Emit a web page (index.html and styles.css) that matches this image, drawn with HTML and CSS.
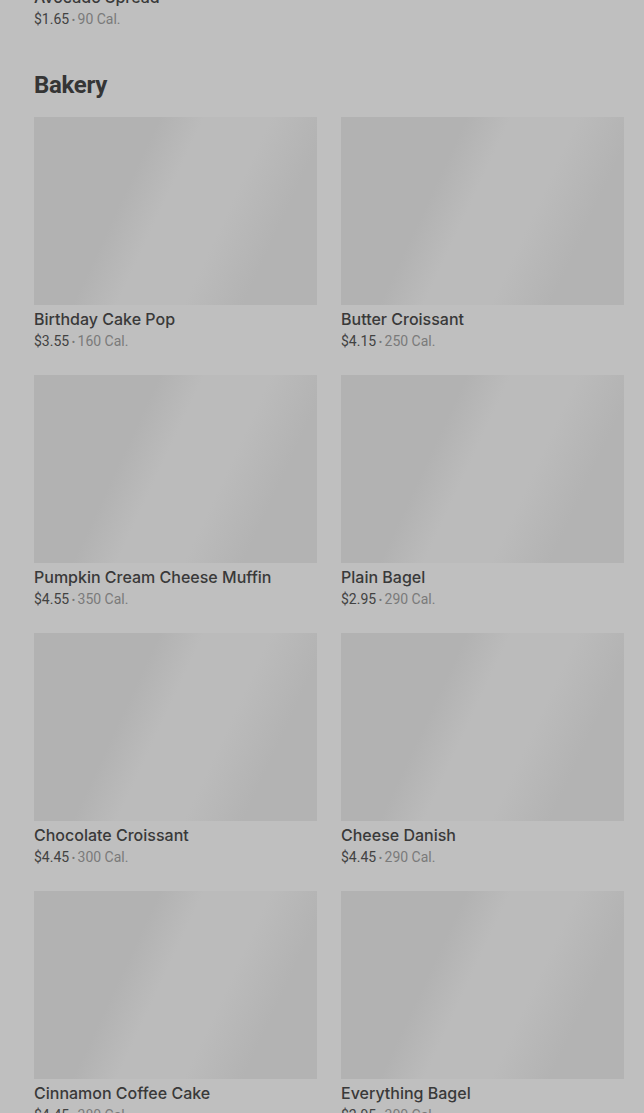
FILE: index.html
```html
<!DOCTYPE html>
<html>
<head>
<meta charset="utf-8">
<link rel="stylesheet" href="styles.css">
</head>
<body>
<div class="page">
  <div class="prev-item">
    <div class="item-title">Avocado Spread</div>
    <div class="item-meta"><span class="price">$1.65</span><span class="dot"> • </span><span class="cal">90 Cal.</span></div>
  </div>
  <section class="section">
    <h2 class="section-title">Bakery</h2>
    <div class="grid">
      <div class="card"><div class="thumb"></div><div class="item-title">Birthday Cake Pop</div><div class="item-meta"><span class="price">$3.55</span><span class="dot"> • </span><span class="cal">160 Cal.</span></div></div>
      <div class="card"><div class="thumb"></div><div class="item-title">Butter Croissant</div><div class="item-meta"><span class="price">$4.15</span><span class="dot"> • </span><span class="cal">250 Cal.</span></div></div>
      <div class="card"><div class="thumb"></div><div class="item-title">Pumpkin Cream Cheese Muffin</div><div class="item-meta"><span class="price">$4.55</span><span class="dot"> • </span><span class="cal">350 Cal.</span></div></div>
      <div class="card"><div class="thumb"></div><div class="item-title">Plain Bagel</div><div class="item-meta"><span class="price">$2.95</span><span class="dot"> • </span><span class="cal">290 Cal.</span></div></div>
      <div class="card"><div class="thumb"></div><div class="item-title">Chocolate Croissant</div><div class="item-meta"><span class="price">$4.45</span><span class="dot"> • </span><span class="cal">300 Cal.</span></div></div>
      <div class="card"><div class="thumb"></div><div class="item-title">Cheese Danish</div><div class="item-meta"><span class="price">$4.45</span><span class="dot"> • </span><span class="cal">290 Cal.</span></div></div>
      <div class="card"><div class="thumb"></div><div class="item-title">Cinnamon Coffee Cake</div><div class="item-meta"><span class="price">$4.45</span><span class="dot"> • </span><span class="cal">380 Cal.</span></div></div>
      <div class="card"><div class="thumb"></div><div class="item-title">Everything Bagel</div><div class="item-meta"><span class="price">$2.95</span><span class="dot"> • </span><span class="cal">300 Cal.</span></div></div>
    </div>
  </section>
</div>
</body>
</html>
```
FILE: styles.css
```css
html, body {
  margin: 0;
  padding: 0;
  background: #bfbfbf;
  overflow: hidden;
}
body {
  font-family: Roboto, "Liberation Sans", sans-serif;
}
.page {
  margin-top: -15px;
  padding: 0 20px 0 34px;
}
.prev-item {
  padding-bottom: 40px;
}
.section-title {
  margin: 0 0 16px;
  font-size: 24px;
  line-height: 32px;
  font-weight: 700;
  color: #353535;
  letter-spacing: -0.3px;
}
.grid {
  display: grid;
  grid-template-columns: 1fr 1fr;
  column-gap: 24px;
}
.card {
  padding-bottom: 24px;
}
.thumb {
  height: 188px;
  margin-bottom: 2px;
  background: linear-gradient(115deg, #b2b2b2 0%, #b2b2b2 34%, #bbbbbb 46%, #bbbbbb 64%, #b3b3b3 80%, #b3b3b3 100%);
}
.item-title {
  font-family: Inter, Roboto, sans-serif;
  font-size: 16px;
  line-height: 24px;
  font-weight: 500;
  color: #393939;
}
.item-meta {
  font-size: 14px;
  line-height: 20px;
}
.price {
  color: #424242;
}
.dot {
  color: #777;
  font-size: 10px;
  line-height: 0;
}
.cal {
  color: #7a7a7a;
}
```
